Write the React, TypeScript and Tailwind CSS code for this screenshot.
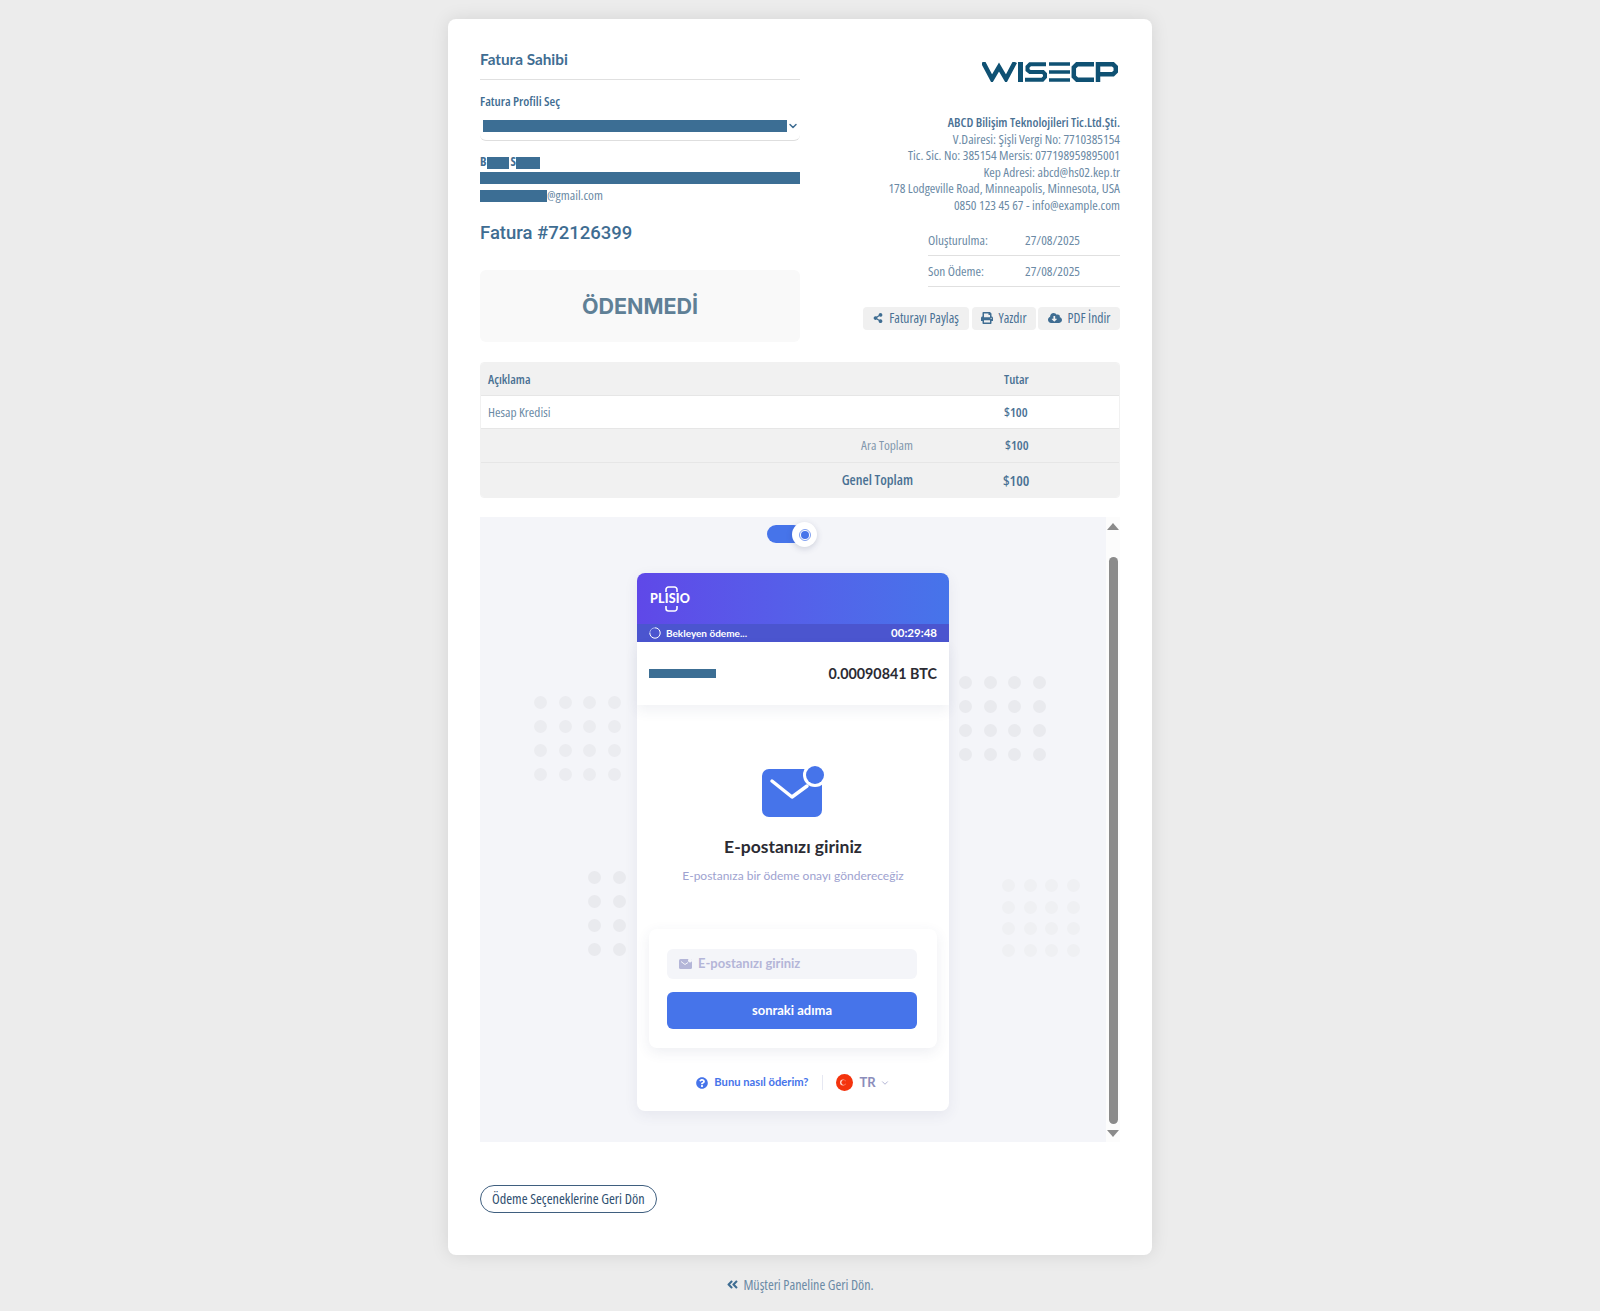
import { FaShareAlt, FaPrint, FaCloudDownloadAlt, FaAngleDoubleLeft, FaQuestionCircle } from "react-icons/fa";
import { ChevronDown } from "lucide-react";

const companyLines = [
    "V.Dairesi: Şişli Vergi No: 7710385154",
    "Tic. Sic. No: 385154 Mersis: 077198959895001",
    "Kep Adresi: abcd@hs02.kep.tr",
    "178 Lodgeville Road, Minneapolis, Minnesota, USA",
    "0850 123 45 67 - info@example.com",
];

function WisecpLogo() {
    return (
        <svg width="136" height="20" viewBox="0 0 136 20" fill="none" stroke="#0f5173" strokeWidth="4.5">
            <polyline points="1,0 10,17 17,5 24,17 33,0" />
            <line x1="38.5" y1="0" x2="38.5" y2="20" strokeWidth="5" />
            <polyline points="64,2.3 48,2.3 45.5,4.8 45.5,8 48,10 61,10 63,12 63,15 60.5,17.7 43,17.7" strokeWidth="4" />
            <line x1="67" y1="2" x2="88" y2="2" strokeWidth="3.5" />
            <line x1="67" y1="10" x2="88" y2="10" strokeWidth="3.5" />
            <line x1="67" y1="18" x2="88" y2="18" strokeWidth="3.5" />
            <polyline points="112,2.3 95,2.3 91.8,5.5 91.8,14.5 95,17.7 112,17.7" />
            <polyline points="116,20 116,2.3 131,2.3 133.8,5 133.8,9.5 131,12.2 118,12.2" />
        </svg>
    );
}

function Dots({ className, tone }: { className: string; tone: string }) {
    const cells = Array.from({ length: 16 });
    return (
        <div className={`absolute grid grid-cols-4 ${className}`}>
            {cells.map((_, i) => (
                <div key={i} className={`h-[13px] w-[13px] rounded-full ${tone}`} />
            ))}
        </div>
    );
}

function PlisioFrame() {
    return (
        <div className="relative h-[625px] w-[626px] overflow-hidden bg-[#f4f5f9]">
            <Dots className="left-[54px] top-[179px] gap-x-[11.5px] gap-y-[11px]" tone="bg-[#ebecf0]" />
            <Dots className="left-[479px] top-[159px] gap-x-[11.5px] gap-y-[11px]" tone="bg-[#e9eaee]" />
            <Dots className="left-[108px] top-[354px] gap-x-[11.5px] gap-y-[11px]" tone="bg-[#e9eaee]" />
            <Dots className="left-[522px] top-[362px] gap-x-[8.5px] gap-y-[8.5px]" tone="bg-[#eff0f3]" />

            <div className="relative flex h-[56px] justify-center pt-[8px]">
                <div className="relative ml-[-2px] h-[18px] w-[50px]">
                    <div className="h-[18px] w-[36px] rounded-full bg-[#4674ea]" />
                    <div className="absolute left-[25px] top-[-3px] flex h-[25px] w-[25px] items-center justify-center rounded-full bg-white shadow-[0_2px_6px_rgba(60,70,110,0.2)]">
                        <div className="flex h-[12px] w-[12px] items-center justify-center rounded-full border border-[#7f9ff0]">
                            <div className="h-[8px] w-[8px] rounded-full bg-[#4674ea]" />
                        </div>
                    </div>
                </div>
            </div>

            <div className="relative ml-[157px] w-[312px] rounded-lg bg-white font-['Lato',sans-serif] [font-stretch:100%] shadow-[0_4px_14px_rgba(60,70,110,0.08)]">
                <div className="rounded-t-lg bg-gradient-to-r from-[#5f48e8] to-[#4674ea]">
                    <div className="flex h-[51px] items-center pl-[13px]">
                        <div className="relative text-[12.5px] font-black leading-[18px] tracking-[0.2px] text-white">
                            PLISIO
                            <svg className="absolute left-[13.5px] top-[-4px]" width="15" height="26" viewBox="0 0 15 26" fill="none" stroke="#fff" strokeWidth="1.6">
                                <path d="M2 6V3.5A2.5 2.5 0 0 1 4.5 1h6A2.5 2.5 0 0 1 13 3.5V6" />
                                <path d="M2 20v2.5A2.5 2.5 0 0 0 4.5 25h6a2.5 2.5 0 0 0 2.5-2.5V20" />
                            </svg>
                        </div>
                    </div>
                    <div className="flex h-[18px] items-center justify-between bg-[#4b55cf] px-[12px] text-white">
                        <div className="flex items-center gap-[5px] text-[10px] font-bold">
                            <svg width="12" height="12" viewBox="0 0 12 12" fill="none" stroke="#fff" strokeWidth="1">
                                <path d="M6 .8A5.2 5.2 0 1 1 .8 6" />
                                <path d="M.8 6A5.2 5.2 0 0 1 6 .8" stroke="#aab0ee" />
                            </svg>
                            Bekleyen ödeme...
                        </div>
                        <span className="text-[11.5px] font-bold">00:29:48</span>
                    </div>
                </div>
                <div className="relative flex h-[63px] items-center justify-between px-[12px] shadow-[0_6px_12px_rgba(60,70,110,0.07)]">
                    <div className="h-[9px] w-[67px] bg-[#3c6e94]" />
                    <span className="text-[14.3px] font-bold text-[#2b2b33]">0.00090841 BTC</span>
                </div>

                <div className="flex flex-col items-center pt-[58px]">
                    <svg className="mr-[1px]" width="66" height="54" viewBox="0 0 66 54" fill="none">
                        <rect x="2" y="6" width="60" height="48" rx="7" fill="#4674ea" />
                        <polyline points="12,18 32,34 47,23" stroke="#fff" strokeWidth="3.5" strokeLinecap="round" strokeLinejoin="round" />
                        <circle cx="55" cy="12" r="12" fill="#fff" />
                        <circle cx="55" cy="12" r="9" fill="#4674ea" />
                    </svg>
                    <div className="mt-[17px] text-[17.5px] font-bold leading-[26px] text-[#2b2b33]">E-postanızı giriniz</div>
                    <div className="mt-[6px] text-[12px] leading-[19px] text-[#9ea2cf]">E-postanıza bir ödeme onayı göndereceğiz</div>
                </div>

                <div className="mx-[12px] mt-[44px] rounded-lg bg-white pb-[19px] pl-[18px] pr-[20px] pt-[20px] shadow-[0_4px_14px_rgba(60,70,110,0.09)]">
                    <div className="flex h-[30px] items-center gap-[6px] rounded-md bg-[#f4f5f9] pl-[12px] text-[13px] font-bold text-[#b4b6d8]">
                        <svg width="13" height="10" viewBox="0 0 13 10">
                            <rect width="13" height="10" rx="1.5" fill="#b4b6d8" />
                            <circle cx="11" cy="1.5" r="2" fill="#f4f5f9" />
                            <polyline points="2,2.5 6,5.5 9,3.5" fill="none" stroke="#f4f5f9" />
                        </svg>
                        E-postanızı giriniz
                    </div>
                    <div className="mt-[13px] flex h-[37px] items-center justify-center rounded-md bg-[#4674ea] text-[13px] font-bold text-white">
                        sonraki adıma
                    </div>
                </div>

                <div className="flex h-[63px] items-center justify-center pt-[6px]">
                    <FaQuestionCircle className="text-[12px] text-[#4674ea]" />
                    <span className="ml-[6px] text-[11.2px] font-bold text-[#4674ea]">Bunu nasıl öderim?</span>
                    <div className="mx-[13px] h-[15px] w-px bg-[#e6e8f2]" />
                    <svg width="17" height="17" viewBox="0 0 17 17">
                        <circle cx="8.5" cy="8.5" r="8.5" fill="#f4330d" />
                        <circle cx="7" cy="8.5" r="3" fill="#ffd9cf" />
                        <circle cx="7.8" cy="8.5" r="2.4" fill="#f4330d" />
                    </svg>
                    <span className="ml-[7px] text-[13px] font-bold text-[#8b8dbb]">TR</span>
                    <ChevronDown className="ml-[4px] text-[#a5a7cc]" size={10} strokeWidth={2} />
                </div>
            </div>
        </div>
    );
}

export default function App() {
    return (
        <div className="min-h-[1311px] bg-[#ececec] pt-[19px] font-['Open_Sans',sans-serif] [font-stretch:75%] text-[#4a7194]">
            <div className="mx-auto w-[704px] rounded-lg bg-white px-8 pb-[42px] pt-[30px] shadow-[0_0_18px_rgba(0,0,0,0.1)]">
                <div className="flex justify-between">
                    <div className="w-[320px]">
                        <div className="border-b border-[#e0e0e0] pb-[10px] font-['Lato',sans-serif] text-[15.3px] font-bold leading-[20px] text-[#3f6d92] [font-stretch:100%]">
                            Fatura Sahibi
                        </div>
                        <div className="mt-[14px] text-[13px] font-semibold leading-[14px] text-[#3f6d92]">Fatura Profili Seç</div>
                        <div className="mt-[12px] flex h-[21px] items-start rounded-b-md border-b border-[#dedede] pl-[3px]">
                            <div className="h-[12px] w-[304px] bg-[#3c6e94]" />
                            <ChevronDown className="text-[#3f6d92]" size={12} strokeWidth={3} />
                        </div>
                        <div className="mt-[13px] flex h-[17px] items-center text-[12.3px] font-bold text-[#3f6d92]">
                            B<div className="mx-[1px] h-[12px] w-[22px] bg-[#3c6e94]" />S<div className="h-[12px] w-[24px] bg-[#3c6e94]" />
                        </div>
                        <div className="mt-[1px] h-[12px] w-[320px] bg-[#3c6e94]" />
                        <div className="mt-[6px] flex h-[12px] items-center text-[13.3px] text-[#6b8aa5]">
                            <div className="h-[12px] w-[67px] bg-[#3c6e94]" />@gmail.com
                        </div>
                        <div className="mt-[17px] font-['Roboto',sans-serif] text-[18.5px] font-medium leading-[28px] text-[#3f6d92] [font-stretch:100%]">Fatura #72126399</div>
                        <div className="mt-[23px] flex h-[72px] items-center justify-center rounded-md bg-[#f9f9f9] font-['Inter',sans-serif] text-[21.5px] font-bold text-[#5f8096] [font-stretch:100%]">
                            ÖDENMEDİ
                        </div>
                    </div>

                    <div className="flex w-[270px] flex-col items-end">
                        <div className="mr-[2px] mt-[13px] h-[20px]">
                            <WisecpLogo />
                        </div>
                        <div className="mt-[32px] whitespace-nowrap text-right text-[13.3px] leading-[16.6px] text-[#6b8aa5]">
                            <div className="text-[12.9px] font-semibold text-[#4a7194]">ABCD Bilişim Teknolojileri Tic.Ltd.Şti.</div>
                            {companyLines.map((line) => (
                                <div key={line}>{line}</div>
                            ))}
                        </div>
                        <div className="mt-[11px] w-[192px] text-[13.3px] text-[#6b8aa5]">
                            <div className="flex h-[31px] items-center border-b border-[#e0e0e0] pt-[3px]">
                                <span className="w-[97px]">Oluşturulma:</span>27/08/2025
                            </div>
                            <div className="flex h-[31px] items-center border-b border-[#e0e0e0] pt-[3px]">
                                <span className="w-[97px]">Son Ödeme:</span>27/08/2025
                            </div>
                        </div>
                        <div className="mt-[20px] flex gap-[2.5px] text-[13.6px] font-medium text-[#4a7194]">
                            <div className="flex h-[23px] w-[106px] items-center justify-center gap-[6px] rounded bg-[#f0f0f0]">
                                <FaShareAlt className="text-[10px] text-[#3f6d92]" />Faturayı Paylaş
                            </div>
                            <div className="flex h-[23px] w-[64px] items-center justify-center gap-[6px] rounded bg-[#f0f0f0]">
                                <FaPrint className="text-[12px] text-[#3f6d92]" />Yazdır
                            </div>
                            <div className="flex h-[23px] w-[82px] items-center justify-center gap-[6px] rounded bg-[#f0f0f0]">
                                <FaCloudDownloadAlt className="text-[14px] text-[#3f6d92]" />PDF İndir
                            </div>
                        </div>
                    </div>
                </div>

                <div className="mt-[20px] overflow-hidden rounded border border-[#f1f1f1] text-[13.3px]">
                    <div className="flex h-[33px] items-center border-b border-[#e6e6e6] bg-[#f1f1f1] pt-[1px] text-[12.8px] font-semibold text-[#4a7194]">
                        <div className="flex-1 pl-[7px]">Açıklama</div>
                        <div className="w-[115px]">Tutar</div>
                    </div>
                    <div className="flex h-[33px] items-center border-b border-[#e6e6e6] bg-white pt-[1px]">
                        <div className="flex-1 pl-[7px] text-[#6b8aa5]">Hesap Kredisi</div>
                        <div className="w-[115px] text-[13.2px] font-semibold text-[#4a7194]">$100</div>
                    </div>
                    <div className="flex h-[34px] items-center border-b border-[#e6e6e6] bg-[#f1f1f1]">
                        <div className="w-[432px] text-right text-[#8298ad]">Ara Toplam</div>
                        <div className="flex-1 pl-[92px] text-[13.2px] font-semibold text-[#4a7194]">$100</div>
                    </div>
                    <div className="flex h-[34px] items-center bg-[#f1f1f1] text-[14.2px] font-semibold text-[#4a7194]">
                        <div className="w-[432px] text-right">Genel Toplam</div>
                        <div className="flex-1 pl-[90px] text-[14.7px]">$100</div>
                    </div>
                </div>

                <div className="mt-[19px] flex">
                    <PlisioFrame />
                    <div className="flex h-[625px] w-[14px] flex-col items-center bg-[#fcfcfc]">
                        <div className="mt-[6px] h-0 w-0 border-x-[6px] border-b-[7px] border-x-transparent border-b-[#8b8b8b]" />
                        <div className="mt-[27px] h-[567px] w-[9px] rounded-full bg-[#8b8b8b]" />
                        <div className="mt-[6px] h-0 w-0 border-x-[6px] border-t-[7px] border-x-transparent border-t-[#8b8b8b]" />
                    </div>
                </div>

                <div className="mt-[43px] inline-flex h-[28px] items-center rounded-full border border-[#3f5f7f] px-[11px] text-[14.2px] font-medium text-[#2f4f6f]">
                    Ödeme Seçeneklerine Geri Dön
                </div>
            </div>

            <div className="mt-[19px] flex items-center justify-center gap-[4px] text-[14px] text-[#6b8aa5]">
                <FaAngleDoubleLeft className="text-[13px] text-[#3f6d92]" />Müşteri Paneline Geri Dön.
            </div>
        </div>
    );
}
